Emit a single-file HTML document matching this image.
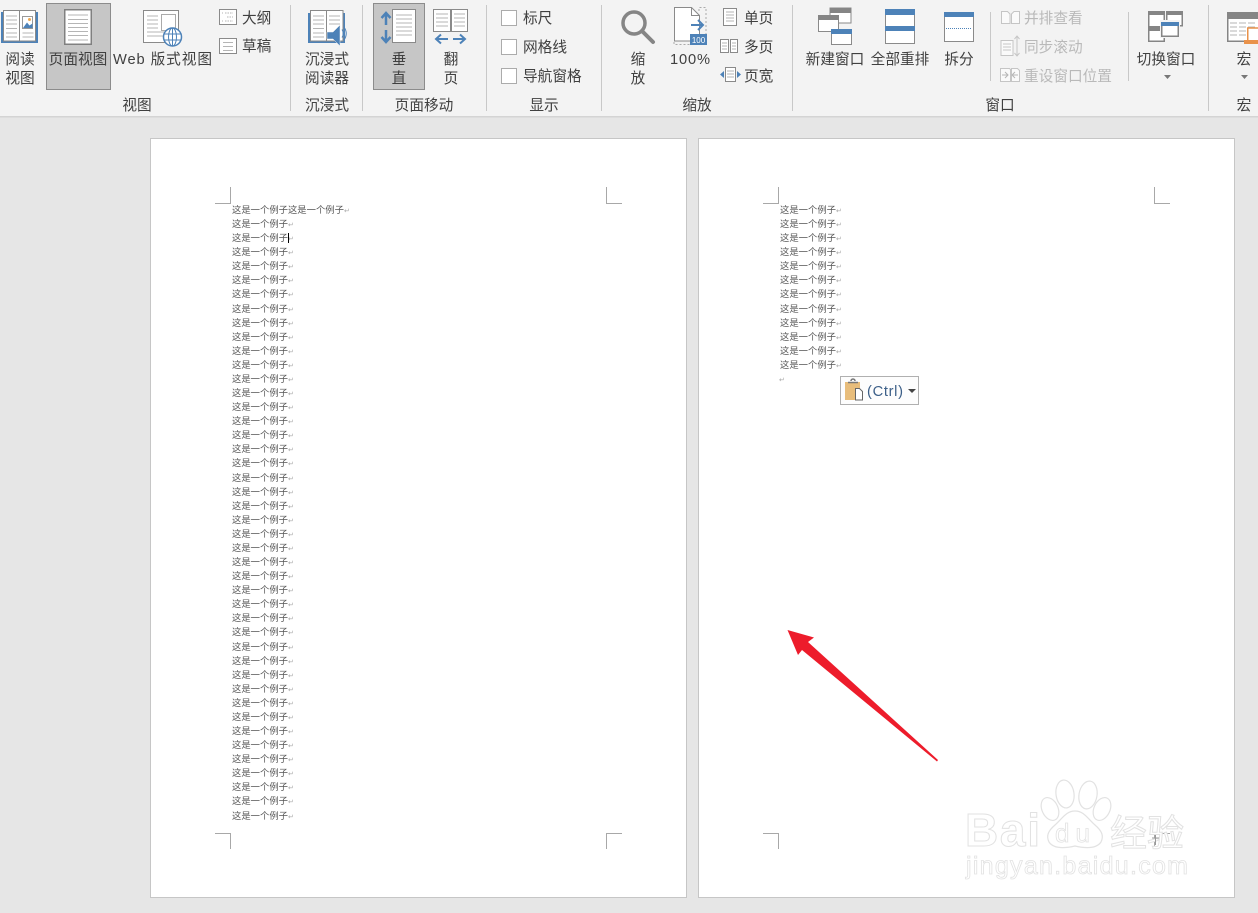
<!DOCTYPE html>
<html lang="zh"><head><meta charset="utf-8"><title>Word</title>
<style>
html,body{margin:0;padding:0;width:1258px;height:913px;overflow:hidden;background:#e6e6e6}
svg{display:block;position:absolute;left:0;top:0}
text{font-family:"Liberation Sans","Noto Sans CJK SC",sans-serif}
.t{font-size:14.67px;fill:#404040}
.m{text-anchor:middle}
.d{font-size:14.67px;fill:#b9b9b9}
.l{font-size:9.33px;fill:#555}
.r{font-family:"DejaVu Sans",sans-serif;font-size:7px;fill:#aaa}
.g{stroke:#b5b5b5;stroke-width:1;fill:none}
.w{text-anchor:start;fill:#fff;stroke:#e2e2e2;stroke-width:1}
</style></head><body>
<svg width="1258" height="913" viewBox="0 0 1258 913" xmlns="http://www.w3.org/2000/svg">
<rect width="1258" height="913" fill="#e6e6e6"/>
<rect width="1258" height="116" fill="#f3f3f3"/>
<rect y="116" width="1258" height="1.5" fill="#d4d4d4"/>
<!-- separators -->
<g fill="#c8c8c8"><rect x="290" y="5" width="1" height="106"/><rect x="362" y="5" width="1" height="106"/><rect x="486" y="5" width="1" height="106"/><rect x="601" y="5" width="1" height="106"/><rect x="792" y="5" width="1" height="106"/><rect x="1208" y="5" width="1" height="106"/><rect x="990" y="12" width="1" height="69"/><rect x="1128" y="12" width="1" height="69"/></g>
<!-- active -->
<rect x="46.500" y="3.500" width="64" height="86" fill="#c6c6c6" stroke="#8c8c8c"/>
<rect x="373.500" y="3.500" width="51" height="86" fill="#c6c6c6" stroke="#8c8c8c"/>
<!-- reading view -->
<rect x="1" y="12" width="37" height="31" fill="#4d82b8"/>
<rect x="3.500" y="10.500" width="32" height="30.500" fill="#fff" stroke="#8a8a8a"/>
<path d="M19.500 10.500v30.500" stroke="#8a8a8a"/>
<path d="M6 16h11M6 20h11M6 24h11M6 28.500h11M6 33h11M6 37h11M22.500 33h11M22.500 37h11" class="g"/>
<rect x="22.500" y="16.500" width="10" height="12" fill="#fff" stroke="#999"/>
<path d="M23 28l4-5.500 2.500 3 3-2v4.500z" fill="#4d82b8"/><circle cx="29.500" cy="19.500" r="1.500" fill="#eda64f"/>
<!-- page view -->
<rect x="64.750" y="9.750" width="26.500" height="34.500" fill="#fff" stroke="#808080" stroke-width="1.500"/>
<path d="M68 15h20M68 19.500h20M68 23.500h20M68 27.500h20M68 31.500h20M68 35.500h20M68 40h20" class="g"/>
<!-- web view -->
<rect x="143.500" y="10.500" width="35" height="32" fill="#fff" stroke="#8a8a8a"/>
<rect x="161.500" y="14.500" width="14" height="16" fill="#fff" stroke="#aaa"/>
<path d="M147 16h11M147 20h11M147 24h11M147 28h11M147 32h20M147 36h18" class="g"/>
<circle cx="172.500" cy="37" r="9" fill="#fff" stroke="#4d82b8" stroke-width="1.500"/>
<ellipse cx="172.500" cy="37" rx="4" ry="9" fill="none" stroke="#4d82b8"/>
<path d="M172.500 28v18M164 34h17M164 40h17" stroke="#4d82b8" fill="none"/>
<!-- outline / draft -->
<rect x="219.500" y="9.500" width="17" height="15" fill="#fff" stroke="#8a8a8a"/>
<path d="M225 13h8M227 17h6M225 21h8" class="g" stroke-dasharray="1.500 1"/>
<path d="M222 13h1M222 21h1" class="g"/>
<rect x="219.500" y="38.500" width="17" height="15" fill="#fff" stroke="#8a8a8a"/>
<path d="M223 42.500h10M223 46.500h10M223 50.500h10" class="g"/>
<!-- immersive -->
<rect x="308" y="13" width="37" height="30" fill="#4d82b8"/>
<rect x="310.500" y="10.500" width="32.500" height="30.500" fill="#fff" stroke="#8a8a8a"/>
<path d="M326.500 10.500v30.500" stroke="#8a8a8a"/>
<path d="M313 16h11M313 20h11M313 24h11M313 28.500h11M313 33h11M313 37h11M329 16h11M329 20h11M329 24h11" class="g"/>
<path d="M327 32h6l7-7v21l-7-7h-6z" fill="#4d82b8" stroke="#f3f3f3" stroke-width=".5"/>
<path d="M342 29.500q2.500 4 0 8M344 27q4.500 6.500 0 13" stroke="#4d82b8" fill="none"/>
<!-- vertical -->
<path d="M386 13v12M386 30v12M381.500 18l4.500-5 4.500 5M381.500 37l4.500 5 4.500-5" fill="none" stroke="#4d82b8" stroke-width="2.500"/>
<rect x="392.500" y="9.500" width="23" height="33" fill="#fff" stroke="#8a8a8a"/>
<path d="M396 15h16M396 19h16M396 23h16M396 27h16M396 31h16M396 35h16" class="g"/>
<!-- flip -->
<rect x="433.500" y="9.500" width="17" height="22" fill="#fff" stroke="#8a8a8a"/>
<rect x="451.500" y="9.500" width="16" height="22" fill="#fff" stroke="#8a8a8a"/>
<path d="M436 14h12M436 18h12M436 22h12M436 26h12M454 14h11M454 18h11M454 22h11M454 26h11" class="g"/>
<path d="M436 39h12M441 34.500l-5 4.500 5 4.500M453 39h12M460 34.500l5 4.500-5 4.500" fill="none" stroke="#4d82b8" stroke-width="2"/>
<!-- checkboxes -->
<g fill="#fff" stroke="#ababab"><rect x="501.500" y="10.500" width="15" height="15"/><rect x="501.500" y="39.500" width="15" height="15"/><rect x="501.500" y="68.500" width="15" height="15"/></g>
<!-- zoom -->
<circle cx="634" cy="23" r="11" fill="none" stroke="#858585" stroke-width="3.500"/>
<path d="M642 31l11 11" stroke="#858585" stroke-width="4" stroke-linecap="round"/>
<!-- 100 -->
<path d="M699 11v-3.500h7v37h-32v-3" fill="none" stroke="#aaa" stroke-dasharray="2 2"/>
<path d="M674.500 7.500h17l8 8v25.500h-25z" fill="#fff" stroke="#8a8a8a"/>
<path d="M691.500 7.500v8h8" fill="none" stroke="#8a8a8a"/>
<path d="M691 25h12M698 20l5 5-5 5" fill="none" stroke="#4d82b8" stroke-width="2"/>
<rect x="690" y="34" width="17" height="11" fill="#4d82b8"/>
<text x="698.500" y="43" font-size="8" fill="#fff" text-anchor="middle">100</text>
<!-- single multi width -->
<rect x="723.500" y="8.500" width="13" height="17" fill="#fff" stroke="#8a8a8a"/>
<path d="M726 12h8M726 15h8M726 18h8M726 21h8" class="g"/>
<rect x="720.500" y="39.500" width="8" height="13" fill="#fff" stroke="#8a8a8a"/><rect x="730.500" y="39.500" width="7" height="13" fill="#fff" stroke="#8a8a8a"/>
<path d="M722 43h5M722 46h5M722 49h5M732 43h4M732 46h4M732 49h4" class="g"/>
<rect x="725.500" y="67.500" width="10" height="14" fill="#fff" stroke="#8a8a8a"/>
<path d="M727 71h7M727 74h7M727 77h7" class="g"/>
<path d="M724 71v7l-4-3.500zM737 71v7l4-3.500z" fill="#4d82b8"/>
<!-- new window -->
<rect x="830" y="8" width="21" height="15" fill="#fff" stroke="#8a8a8a"/><rect x="830" y="8" width="21" height="5" fill="#858585"/>
<rect x="818.500" y="15.500" width="20" height="16" fill="#fff" stroke="#8a8a8a"/><rect x="818" y="15" width="21" height="5" fill="#858585"/>
<rect x="831.500" y="29.500" width="20" height="15" fill="#fff" stroke="#8a8a8a"/><rect x="831" y="29" width="21" height="5" fill="#4d82b8"/>
<!-- arrange all -->
<rect x="885.500" y="9.500" width="29" height="34" fill="#fff" stroke="#8a8a8a"/>
<rect x="885" y="9" width="30" height="6" fill="#4d82b8"/><rect x="885" y="26" width="30" height="5" fill="#4d82b8"/>
<!-- split -->
<rect x="944.500" y="12.500" width="29" height="29" fill="#fff" stroke="#8a8a8a"/>
<rect x="944" y="12" width="30" height="5" fill="#4d82b8"/>
<path d="M946 28.500h26" stroke="#4d82b8" stroke-dasharray="1 1"/>
<!-- disabled -->
<path d="M1001.500 11.500h6l2.500 2.500v9.500h-8.500zM1011.500 14l2.500-2.500h5.500v12h-8z" fill="#fafafa" stroke="#c5c5c5"/>
<path d="M1001 40.500h12v15h-12z" fill="#fafafa" stroke="#c5c5c5"/>
<path d="M1003 44h8M1003 47h8M1003 50h8M1017 37v18M1014.500 39l2.500-3 2.500 3M1014.500 53l2.500 3 2.500-3" fill="none" stroke="#c5c5c5"/>
<path d="M1000.500 68.500h9l1 1v12h-10zM1011.500 68.500h6l2 2v11h-8z" fill="#fafafa" stroke="#c5c5c5"/>
<path d="M1002 75h6M1005 72l3 3-3 3M1018 75h-5M1015 72l-3 3 3 3" fill="none" stroke="#b5b5b5"/>
<!-- switch -->
<g fill="#fff" stroke="#858585" stroke-width="1.500">
<rect x="1148.750" y="11.750" width="15.500" height="15"/><rect x="1166.750" y="11.750" width="15.500" height="14"/><rect x="1148.750" y="27.750" width="15.500" height="13.500"/>
</g>
<rect x="1148" y="11" width="17" height="4" fill="#858585"/><rect x="1166" y="11" width="17" height="4" fill="#858585"/><rect x="1148" y="27" width="17" height="4" fill="#858585"/>
<rect x="1160" y="20" width="20" height="18" fill="#f3f3f3"/>
<rect x="1161.750" y="22.750" width="16.500" height="13.500" fill="#fff" stroke="#858585" stroke-width="1.500"/><rect x="1161" y="22" width="18" height="4" fill="#4d82b8"/>
<path d="M1164 75h7l-3.500 4z" fill="#777"/>
<!-- macro -->
<rect x="1227.750" y="12.750" width="31" height="28.500" fill="#fff" stroke="#858585" stroke-width="1.500"/><rect x="1227" y="12" width="31" height="7" fill="#858585"/>
<path d="M1230 23h7M1239 23h7M1248 23h7M1230 27h7M1239 27h7M1248 27h7M1230 31h7M1239 31h7M1230 35h7M1239 35h7" class="g"/>
<rect x="1247.750" y="28" width="12" height="13" fill="#fff" stroke="#e9924a" stroke-width="1.500"/><rect x="1244" y="40" width="14" height="4" fill="#e9924a"/>
<path d="M1241 75h7l-3.500 4z" fill="#777"/>
<!-- ribbon text -->
<text class="t m" x="20" y="64">阅读</text><text class="t m" x="20" y="83">视图</text>
<text class="t m" x="78" y="64">页面视图</text>
<text class="t" x="113" y="64" textLength="99" lengthAdjust="spacing">Web 版式视图</text>
<text class="t" x="242" y="23">大纲</text><text class="t" x="242" y="51">草稿</text>
<text class="t m" x="327" y="64">沉浸式</text><text class="t m" x="327" y="83">阅读器</text>
<text class="t m" x="399" y="64">垂</text><text class="t m" x="399" y="83">直</text>
<text class="t m" x="451" y="64">翻</text><text class="t m" x="451" y="83">页</text>
<text class="t" x="523" y="23">标尺</text><text class="t" x="523" y="52">网格线</text><text class="t" x="523" y="81">导航窗格</text>
<text class="t m" x="638" y="64">缩</text><text class="t m" x="638" y="83">放</text>
<text class="t" x="670" y="64" textLength="40" lengthAdjust="spacing">100%</text>
<text class="t" x="744" y="23">单页</text><text class="t" x="744" y="52">多页</text><text class="t" x="744" y="81">页宽</text>
<text class="t m" x="835" y="64">新建窗口</text><text class="t m" x="900" y="64">全部重排</text><text class="t m" x="959" y="64">拆分</text>
<text class="d" x="1024" y="23">并排查看</text><text class="d" x="1024" y="52">同步滚动</text><text class="d" x="1024" y="81">重设窗口位置</text>
<text class="t m" x="1166" y="64">切换窗口</text><text class="t m" x="1244" y="64">宏</text>
<text class="t m" x="137" y="110">视图</text><text class="t m" x="327" y="110">沉浸式</text><text class="t m" x="424" y="110">页面移动</text><text class="t m" x="544" y="110">显示</text><text class="t m" x="697" y="110">缩放</text><text class="t m" x="1000" y="110">窗口</text><text class="t m" x="1244" y="110">宏</text>
<!-- pages -->
<rect x="150.500" y="138.500" width="536" height="759" fill="#fff" stroke="#c6c6c6"/>
<rect x="698.500" y="138.500" width="536" height="759" fill="#fff" stroke="#c6c6c6"/>
<path d="M215 203.500h15.500V187M622 203.500h-15.500V187M215 833.500h15.500V849M622 833.500h-15.500V849M763 203.500h15.500V187M1170 203.500h-15.500V187M763 833.500h15.500V849M1170 833.500h-15.500V849" fill="none" stroke="#a8a8a8"/>
<!-- left page text -->
<g class="l">
<text class="l" x="232" y="213">这是一个例子这是一个例子</text>
<text class="l" x="232" y="227">这是一个例子</text>
<text class="l" x="232" y="241">这是一个例子</text>
<text class="l" x="232" y="255">这是一个例子</text>
<text class="l" x="232" y="269">这是一个例子</text>
<text class="l" x="232" y="283">这是一个例子</text>
<text class="l" x="232" y="297">这是一个例子</text>
<text class="l" x="232" y="312">这是一个例子</text>
<text class="l" x="232" y="326">这是一个例子</text>
<text class="l" x="232" y="340">这是一个例子</text>
<text class="l" x="232" y="354">这是一个例子</text>
<text class="l" x="232" y="368">这是一个例子</text>
<text class="l" x="232" y="382">这是一个例子</text>
<text class="l" x="232" y="396">这是一个例子</text>
<text class="l" x="232" y="410">这是一个例子</text>
<text class="l" x="232" y="424">这是一个例子</text>
<text class="l" x="232" y="438">这是一个例子</text>
<text class="l" x="232" y="452">这是一个例子</text>
<text class="l" x="232" y="466">这是一个例子</text>
<text class="l" x="232" y="481">这是一个例子</text>
<text class="l" x="232" y="495">这是一个例子</text>
<text class="l" x="232" y="509">这是一个例子</text>
<text class="l" x="232" y="523">这是一个例子</text>
<text class="l" x="232" y="537">这是一个例子</text>
<text class="l" x="232" y="551">这是一个例子</text>
<text class="l" x="232" y="565">这是一个例子</text>
<text class="l" x="232" y="579">这是一个例子</text>
<text class="l" x="232" y="593">这是一个例子</text>
<text class="l" x="232" y="607">这是一个例子</text>
<text class="l" x="232" y="621">这是一个例子</text>
<text class="l" x="232" y="635">这是一个例子</text>
<text class="l" x="232" y="650">这是一个例子</text>
<text class="l" x="232" y="664">这是一个例子</text>
<text class="l" x="232" y="678">这是一个例子</text>
<text class="l" x="232" y="692">这是一个例子</text>
<text class="l" x="232" y="706">这是一个例子</text>
<text class="l" x="232" y="720">这是一个例子</text>
<text class="l" x="232" y="734">这是一个例子</text>
<text class="l" x="232" y="748">这是一个例子</text>
<text class="l" x="232" y="762">这是一个例子</text>
<text class="l" x="232" y="776">这是一个例子</text>
<text class="l" x="232" y="790">这是一个例子</text>
<text class="l" x="232" y="804">这是一个例子</text>
<text class="l" x="232" y="819">这是一个例子</text>
</g>
<g>
<text class="r" x="344" y="213">↵</text>
<text class="r" x="288" y="227">↵</text><text class="r" x="288" y="241">↵</text><text class="r" x="288" y="255">↵</text><text class="r" x="288" y="269">↵</text><text class="r" x="288" y="283">↵</text><text class="r" x="288" y="297">↵</text><text class="r" x="288" y="312">↵</text><text class="r" x="288" y="326">↵</text><text class="r" x="288" y="340">↵</text><text class="r" x="288" y="354">↵</text><text class="r" x="288" y="368">↵</text><text class="r" x="288" y="382">↵</text><text class="r" x="288" y="396">↵</text><text class="r" x="288" y="410">↵</text><text class="r" x="288" y="424">↵</text><text class="r" x="288" y="438">↵</text><text class="r" x="288" y="452">↵</text><text class="r" x="288" y="466">↵</text><text class="r" x="288" y="481">↵</text><text class="r" x="288" y="495">↵</text><text class="r" x="288" y="509">↵</text><text class="r" x="288" y="523">↵</text><text class="r" x="288" y="537">↵</text><text class="r" x="288" y="551">↵</text><text class="r" x="288" y="565">↵</text><text class="r" x="288" y="579">↵</text><text class="r" x="288" y="593">↵</text><text class="r" x="288" y="607">↵</text><text class="r" x="288" y="621">↵</text><text class="r" x="288" y="635">↵</text><text class="r" x="288" y="650">↵</text><text class="r" x="288" y="664">↵</text><text class="r" x="288" y="678">↵</text><text class="r" x="288" y="692">↵</text><text class="r" x="288" y="706">↵</text><text class="r" x="288" y="720">↵</text><text class="r" x="288" y="734">↵</text><text class="r" x="288" y="748">↵</text><text class="r" x="288" y="762">↵</text><text class="r" x="288" y="776">↵</text><text class="r" x="288" y="790">↵</text><text class="r" x="288" y="804">↵</text><text class="r" x="288" y="819">↵</text>
</g>
<rect x="288" y="233" width="1" height="10" fill="#000"/>
<!-- right page text -->
<text class="l" x="780" y="213">这是一个例子</text>
<text class="l" x="780" y="227">这是一个例子</text>
<text class="l" x="780" y="241">这是一个例子</text>
<text class="l" x="780" y="255">这是一个例子</text>
<text class="l" x="780" y="269">这是一个例子</text>
<text class="l" x="780" y="283">这是一个例子</text>
<text class="l" x="780" y="297">这是一个例子</text>
<text class="l" x="780" y="312">这是一个例子</text>
<text class="l" x="780" y="326">这是一个例子</text>
<text class="l" x="780" y="340">这是一个例子</text>
<text class="l" x="780" y="354">这是一个例子</text>
<text class="l" x="780" y="368">这是一个例子</text>
<text class="r" x="836" y="213">↵</text><text class="r" x="836" y="227">↵</text><text class="r" x="836" y="241">↵</text><text class="r" x="836" y="255">↵</text><text class="r" x="836" y="269">↵</text><text class="r" x="836" y="283">↵</text><text class="r" x="836" y="297">↵</text><text class="r" x="836" y="312">↵</text><text class="r" x="836" y="326">↵</text><text class="r" x="836" y="340">↵</text><text class="r" x="836" y="354">↵</text><text class="r" x="836" y="368">↵</text>
<text class="r" x="779" y="382">↵</text>
<!-- paste button -->
<rect x="840.500" y="376.500" width="78" height="28" fill="#fdfdfd" stroke="#b0b0b0"/>
<rect x="845" y="382" width="15" height="18" fill="#e8bd7b"/>
<path d="M848 382.500h10M851 381a2 2 0 0 1 4 0" fill="none" stroke="#777" stroke-width="1.500"/>
<path d="M855.500 388.500h4l3 3v8.500h-7z" fill="#fff" stroke="#666"/>
<text x="867" y="396" font-size="14.670" fill="#3c5f88" textLength="36" lengthAdjust="spacing">(Ctrl)</text>
<path d="M908 389h8l-4 4z" fill="#444"/>
<!-- arrow -->
<path d="M787.500 630L814 637.500 808 642 938 760 937 761.500 802 650 798 655z" fill="#ed1c2b"/>
<!-- watermark -->
<g fill="#fff" stroke="#e2e2e2" stroke-width="1.200">
<ellipse cx="1065" cy="794" rx="9" ry="14" transform="rotate(-8 1065 794)"/>
<ellipse cx="1088" cy="795" rx="9" ry="14" transform="rotate(10 1088 795)"/>
<ellipse cx="1050" cy="809" rx="8" ry="12" transform="rotate(-25 1050 809)"/>
<ellipse cx="1102" cy="809" rx="8" ry="12" transform="rotate(25 1102 809)"/>
<path d="M1075 811c9 0 13 8 20 14 7 6 9 11 6 17-4 6-13 7-26 4-13 3-22 2-26-4-3-6-1-11 6-17 7-6 11-14 20-14z"/>
</g>
<text class="w" x="965" y="846" font-size="46" font-weight="bold" textLength="75" lengthAdjust="spacing">Bai</text>
<text class="w" x="1055" y="842" font-size="26" style="stroke-width:.8" textLength="35" lengthAdjust="spacing">du</text>
<text class="w" x="1110" y="846" font-size="37">经验</text>
<text class="w" x="966" y="874" font-size="25" style="stroke-width:.8" textLength="222" lengthAdjust="spacing">jingyan.baidu.com</text>
<path d="M1152 838h7M1155.500 835v10" stroke="#999" stroke-width="1"/>
</svg>
</body></html>
